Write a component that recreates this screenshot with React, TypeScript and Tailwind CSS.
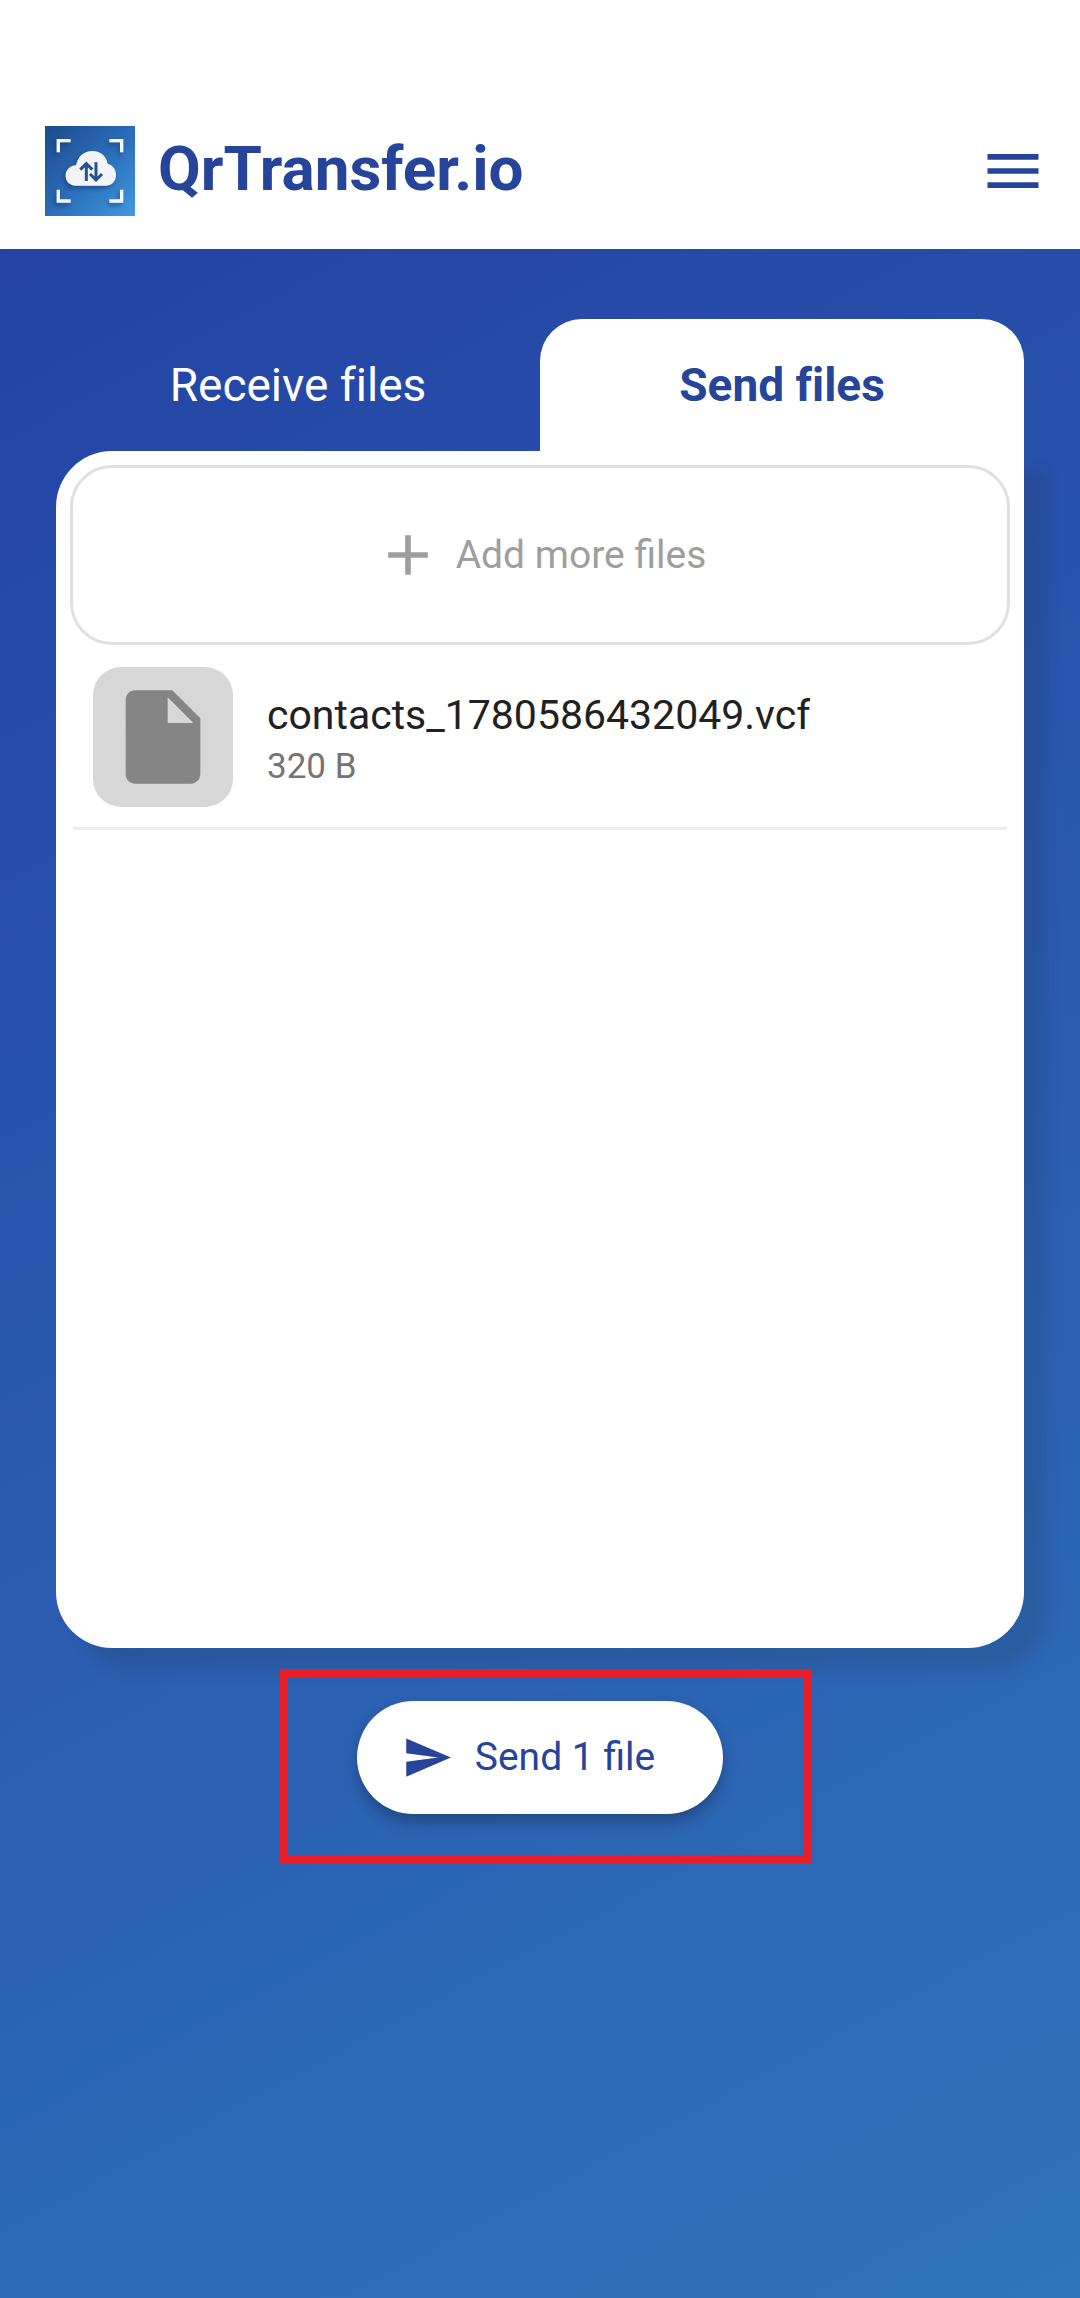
import React, { useState } from 'react';
import { MdAdd, MdInsertDriveFile, MdMenu, MdSend } from 'react-icons/md';

interface FileEntry {
  name: string;
  size: string;
}

type Tab = 'receive' | 'send';

const FILES: FileEntry[] = [{ name: 'contacts_1780586432049.vcf', size: '320 B' }];

const Logo: React.FC<{ className?: string }> = ({ className }) => (
  <svg viewBox="0 0 270 270" className={className} aria-hidden="true">
    <defs>
      <linearGradient id="logo-bg" x1="0" y1="0" x2="1" y2="1">
        <stop offset="0" stopColor="#1c4a8c" />
        <stop offset="0.5" stopColor="#2a6cb8" />
        <stop offset="1" stopColor="#409ae0" />
      </linearGradient>
      <filter id="logo-shadow" x="-20%" y="-20%" width="140%" height="140%">
        <feDropShadow dx="-6" dy="8" stdDeviation="6" floodColor="#0c2f66" floodOpacity="0.55" />
      </filter>
    </defs>
    <rect width="270" height="270" fill="url(#logo-bg)" />
    <g filter="url(#logo-shadow)">
      <path
        d="M40 79V44H77M193 44H230V79M40 191V225H77M193 225H230V191"
        fill="none"
        stroke="#f4f8fc"
        strokeWidth="10"
      />
      <path
        d="M94 179C75 179 62 166 62 149C62 132 75 119 93 118C99 91 117 75 142 75C166 75 183 89 188 113C203 117 213 130 213 146C213 165 200 179 181 179Z"
        fill="#f2f4f7"
      />
    </g>
    <path
      d="M124 165V114M106 131L124 113L142 131M153 109V160M135 144L153 162L171 144"
      fill="none"
      stroke="#24518f"
      strokeWidth="9"
    />
  </svg>
);

const Header = () => (
  <header className="bg-white pt-[92px]">
    <div className="flex h-[157px] items-center pl-[45px] pr-[33px]">
      <Logo className="size-[90px] shrink-0" />
      <h1 className="ml-[23px] pb-1 text-[62px] leading-[72px] font-bold text-[#27449b]">QrTransfer.io</h1>
      <button type="button" aria-label="Menu" className="ml-auto text-[#27449b]">
        <MdMenu size={68} />
      </button>
    </div>
  </header>
);

const FileRow: React.FC<{ file: FileEntry }> = ({ file }) => (
  <li className="mx-[3px] flex items-center gap-[34px] border-b-[3px] border-[#eeeeee] px-5 pt-[22px] pb-5">
    <div className="flex size-[140px] shrink-0 items-center justify-center rounded-[28px] bg-[#d7d7d7] text-[#858585]">
      <MdInsertDriveFile size={112} />
    </div>
    <div className="min-w-0 pt-1">
      <p className="truncate text-[41px] leading-[56px] text-[#212121] [font-variant-ligatures:none]">{file.name}</p>
      <p className="text-[35px] leading-[48px] text-[#757575]">{file.size}</p>
    </div>
  </li>
);

export default function App() {
  const [tab, setTab] = useState<Tab>('send');

  const tabClass = (name: Tab) =>
    tab === name
      ? 'rounded-t-[42px] bg-white font-bold text-[#27449b]'
      : 'font-normal text-white';

  return (
    <div className="flex min-h-screen flex-col bg-white font-['Roboto',sans-serif]">
      <Header />

      <main className="flex flex-1 flex-col bg-[linear-gradient(152deg,#2443a4_0%,#2f73bc_100%)] px-14 pt-[70px]">
        {/* Tabs */}
        <div role="tablist" className="grid h-[132px] grid-cols-2 text-[46px] [font-variant-ligatures:none]">
          <button type="button" role="tab" aria-selected={tab === 'receive'} onClick={() => setTab('receive')} className={tabClass('receive')}>
            Receive files
          </button>
          <button type="button" role="tab" aria-selected={tab === 'send'} onClick={() => setTab('send')} className={tabClass('send')}>
            Send files
          </button>
        </div>

        {/* File list */}
        <section
          className={`flex-1 bg-white p-[14px] shadow-[22px_22px_14px_rgba(35,60,90,0.22)] ${
            tab === 'send' ? 'rounded-b-[56px] rounded-tl-[56px]' : 'rounded-b-[56px] rounded-tr-[56px]'
          }`}
        >
          <button
            type="button"
            className="flex h-[180px] w-full items-center justify-center gap-[14px] rounded-[42px] border-[3px] border-[#e0e0e0] text-[39px] text-[#9e9e9e]"
          >
            <MdAdd size={68} />
            Add more files
          </button>
          <ul>
            {FILES.map((file) => (
              <FileRow key={file.name} file={file} />
            ))}
          </ul>
        </section>

        {/* Send action */}
        <div className="flex justify-center pt-[53px] pb-[484px]">
          <div className="relative">
            <button
              type="button"
              className="flex h-[113px] items-center gap-[22px] rounded-full bg-white pr-[68px] pl-[45px] text-[39px] text-[#27449b] shadow-[0_8px_14px_rgba(20,40,70,0.45)]"
            >
              <MdSend size={51} />
              Send 1 file
            </button>
            <div className="pointer-events-none absolute -top-8 -right-[89px] -bottom-[49px] -left-[77px] border-8 border-[#e91e29]" />
          </div>
        </div>
      </main>
    </div>
  );
}
